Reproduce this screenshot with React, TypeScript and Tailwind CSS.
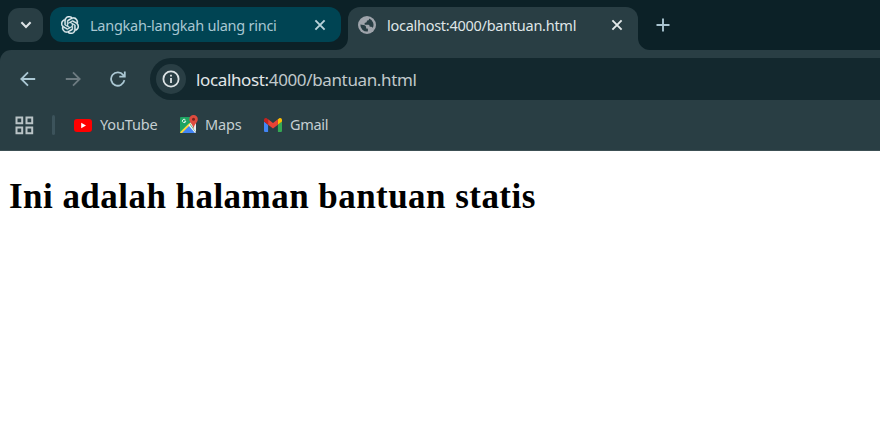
import React from "react";
import { SiOpenai } from "react-icons/si";

function Close({ className }: { className: string }) {
  return (
    <svg viewBox="0 0 12 12" className={`h-3 w-3 shrink-0 ${className}`} fill="none" stroke="currentColor" strokeWidth="1.9">
      <path d="M1.4 1.4 10.6 10.6M10.6 1.4 1.4 10.6" />
    </svg>
  );
}

function Globe() {
  return (
    <svg viewBox="0 0 18 18" className="h-[18px] w-[18px] shrink-0">
      <circle cx="9" cy="9" r="9" fill="#9fa4ab" />
      <path
        d="M11 2.6C11.2 3.9 10.4 4.5 9 4.6L8.6 6.2 6.6 7 6.7 8.8H10.4C11.4 9 11.7 9.7 11.7 10.8H13.2C14.1 10.9 14.5 11.3 14.7 12A6.6 6.6 0 0 0 11 2.6Z"
        fill="#293e44"
      />
      <path
        d="M2.4 8.4 5.4 8.9C7.2 9.1 8.1 10 8.1 11.2V12.6H9.5C10 13 10.1 14.2 9.8 15.5A6.6 6.6 0 0 1 2.4 8.4Z"
        fill="#293e44"
      />
    </svg>
  );
}

function MapsIcon() {
  return (
    <svg viewBox="0 0 18 18" className="h-[18px] w-[18px] shrink-0">
      <path d="M0 3Q0 2 1 2H15V18H1Q0 18 0 17Z" fill="#1ea362" />
      <path d="M8.2 9.8 16 18H1Z" fill="#4285f4" />
      <path d="M9.8 8.2 16 2V17.5Z" fill="#e8eaed" />
      <path d="M0 17.2 9.4 8 10.8 9.3 2 18H1Q0 18 0 17.2Z" fill="#fdd835" />
      <path d="m9.5 9 6.3 8.6-.8.4-6.4-7.6Z" fill="#f1f3f4" />
      <path d="M13.5 0A4.2 4.2 0 0 0 9.3 4.3C9.3 8 12.9 8.7 13.5 14 14.1 8.7 17.8 8 17.8 4.3A4.2 4.2 0 0 0 13.5 0Z" fill="#de4b3e" />
      <circle cx="13.5" cy="4.3" r="1.5" fill="#7b231e" />
      <path d="M5.4 4.8A1.7 1.7 0 1 0 5.8 6.2H4.2" fill="none" stroke="#e6f2ec" strokeWidth="1" />
    </svg>
  );
}

function GmailIcon() {
  return (
    <svg viewBox="52 42 88 66" className="h-[14px] w-[18px] shrink-0" preserveAspectRatio="none">
      <path fill="#4285f4" d="M58 108h14V74L52 59v43c0 3.32 2.69 6 6 6" />
      <path fill="#34a853" d="M120 108h14c3.32 0 6-2.69 6-6V59l-20 15" />
      <path fill="#fbbc04" d="M120 48v26l20-15v-8c0-7.42-8.47-11.65-14.4-7.2" />
      <path fill="#ea4335" d="M72 74V48l24 18 24-18v26L96 92" />
      <path fill="#c5221f" d="M52 51v8l20 15V48l-5.6-4.2c-5.94-4.45-14.4-.22-14.4 7.2" />
    </svg>
  );
}

export default function App() {
  return (
    <div className="flex h-[446px] w-[880px] flex-col overflow-hidden bg-white font-['Noto_Sans',sans-serif]">
      <div className="bg-[#0c2127]">
        <div className="flex h-[50px] items-start pl-2">
          <button className="mt-2 flex h-[34px] w-[35px] shrink-0 items-center justify-center rounded-[11px] bg-[#293e44] text-[#dde3e6]">
            <svg viewBox="0 0 12 8" className="h-2 w-3" fill="none" stroke="currentColor" strokeWidth="2.1">
              <path d="m1.4 1.3 4.6 4.6 4.6-4.6" />
            </svg>
          </button>
          <div className="mt-[7px] ml-[7px] flex h-[35px] w-[291px] shrink-0 items-center rounded-[12px] bg-[#004453] pr-[15px] pl-[11px]">
            <SiOpenai className="h-[18px] w-[18px] shrink-0 stroke-[#e3eef1] stroke-[0.5px] text-[#e3eef1]" />
            <span className="ml-[11px] text-[14.5px] leading-5 tracking-[-0.25px] whitespace-nowrap text-[#a8c7d2]">Langkah-langkah ulang rinci</span>
            <Close className="ml-auto text-[#b9d2da]" />
          </div>
          <svg viewBox="0 0 12 12" className="-ml-[5px] h-3 w-3 shrink-0 self-end" fill="#293e44">
            <path d="M12 0A12 12 0 0 1 0 12H12Z" />
          </svg>
          <div className="mt-[7px] flex h-[43px] w-[290px] shrink-0 rounded-t-[12px] bg-[#293e44] pr-[15px] pl-[10px]">
            <div className="flex h-[36px] w-full items-center">
              <Globe />
              <span className="ml-[11px] text-[14.5px] leading-5 tracking-[-0.27px] whitespace-nowrap text-[#dfe5e7]">localhost:4000/bantuan.html</span>
              <Close className="ml-auto text-[#e4e9ea]" />
            </div>
          </div>
          <svg viewBox="0 0 12 12" className="h-3 w-3 shrink-0 self-end" fill="#293e44">
            <path d="M0 0A12 12 0 0 0 12 12H0Z" />
          </svg>
          <svg viewBox="0 0 14 14" className="mt-[18px] ml-[6px] h-[14px] w-[14px] shrink-0" stroke="#a9c4d0" strokeWidth="1.9">
            <path d="M7 .5v13M.5 7h13" />
          </svg>
        </div>
        <div className="flex h-[101px] flex-col rounded-tl-[11px] border-b border-[#3c4f54] bg-[#293e44]">
          <div className="flex h-[50px] items-end">
            <div className="flex h-[42px] w-[150px] items-center pl-5">
              <svg viewBox="0 0 16 16" className="h-4 w-4" fill="none" stroke="#abc8d4" strokeWidth="1.8">
                <path d="M15.2 8H1.5M8 1.3 1.3 8 8 14.7" />
              </svg>
              <svg viewBox="0 0 16 16" className="ml-[29px] h-4 w-4" fill="none" stroke="#6d7b81" strokeWidth="1.8">
                <path d="M.8 8h13.7M8 1.3 14.7 8 8 14.7" />
              </svg>
              <svg viewBox="0 0 16 16" className="ml-[29px] h-4 w-4" fill="none" stroke="#abc8d4" strokeWidth="1.8">
                <path d="M14.4 9.2A6.7 6.7 0 1 1 13.2 4L14.3 5.4M14.8 .4V5.6H9.3" />
              </svg>
            </div>
            <div className="flex h-[42px] flex-1 items-center rounded-l-full bg-[#13282e] pl-[6px]">
              <span className="flex h-[30px] w-[30px] items-center justify-center rounded-full bg-[#293e44]">
                <svg viewBox="0 0 18 18" className="h-[18px] w-[18px]" fill="none" stroke="#dde3e5" strokeWidth="1.8">
                  <circle cx="9" cy="9" r="7.6" />
                  <path d="M9 8v5M9 4.7v1.8" />
                </svg>
              </span>
              <span className="ml-[10px] pt-px text-[17px] leading-6 tracking-[-0.36px] whitespace-nowrap text-[#e1e6e8]">
                localhost:<span className="text-[#c0c8cb]">4000/bantuan.html</span>
              </span>
            </div>
          </div>
          <div className="flex h-[50px] items-center pl-[15px] text-[14.5px] leading-5 text-[#c5cfd2]">
            <svg viewBox="0 0 19 19" className="h-[19px] w-[19px]" fill="none" stroke="#b9c3c6" strokeWidth="2">
              <path d="M1.5 1.5h5.7v5.7H1.5ZM11.5 1.5h5.7v5.7h-5.7ZM1.5 11.5h5.7v5.7H1.5ZM11.5 11.5h5.7v5.7h-5.7Z" />
            </svg>
            <span className="ml-[18px] h-5 w-[3px] rounded bg-[#3c535b]" />
            <svg viewBox="0 0 18 13" className="ml-[19px] h-[13px] w-[18px]">
              <rect width="18" height="13" rx="3" fill="#f00" />
              <path d="m7.2 3.8 4.8 2.7-4.8 2.7Z" fill="#fff" />
            </svg>
            <span className="ml-2 w-[58px] pb-0.5 tracking-[-0.15px] whitespace-nowrap">YouTube</span>
            <span className="ml-[22px] flex pb-0.5"><MapsIcon /></span>
            <span className="ml-[7px] w-[37px] pb-0.5 tracking-[-0.15px] whitespace-nowrap">Maps</span>
            <span className="ml-[22px] flex"><GmailIcon /></span>
            <span className="ml-2 pb-0.5 tracking-[-0.3px] whitespace-nowrap">Gmail</span>
          </div>
        </div>
      </div>
      <main className="pt-[25px] pl-[9px]">
        <h1 className="font-['Liberation_Serif',serif] text-[35px] leading-[42px] font-bold tracking-[0.46px] whitespace-nowrap text-black">Ini adalah halaman bantuan statis</h1>
      </main>
    </div>
  );
}
